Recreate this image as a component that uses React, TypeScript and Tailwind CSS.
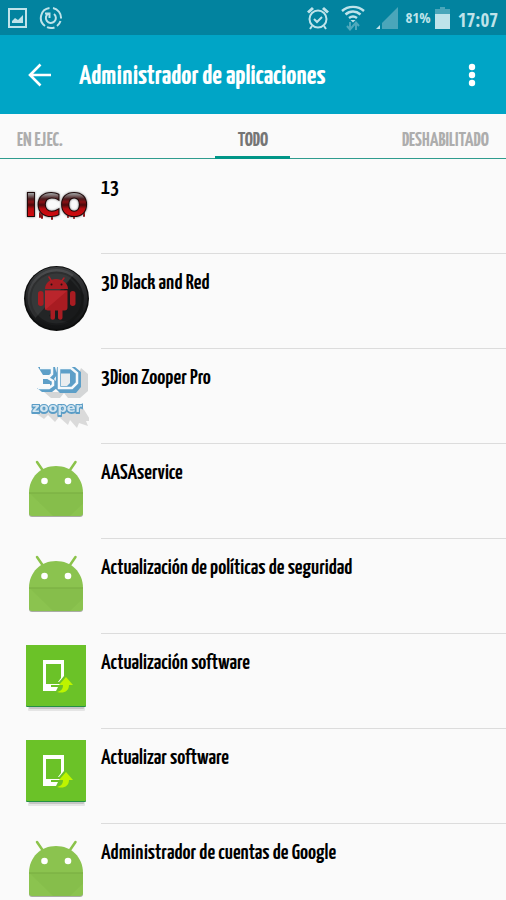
import React, { useState } from 'react';

type IconType = 'ico' | 'redDroid' | 'zooper' | 'droid' | 'update';

const apps: { name: string; icon: IconType }[] = [
  { name: '13', icon: 'ico' },
  { name: '3D Black and Red', icon: 'redDroid' },
  { name: '3Dion Zooper Pro', icon: 'zooper' },
  { name: 'AASAservice', icon: 'droid' },
  { name: 'Actualización de políticas de seguridad', icon: 'droid' },
  { name: 'Actualización software', icon: 'update' },
  { name: 'Actualizar software', icon: 'update' },
  { name: 'Administrador de cuentas de Google', icon: 'droid' },
];

const tabs = [
  { id: 'running', label: 'EN EJEC.', align: 'justify-start' },
  { id: 'all', label: 'TODO', align: 'justify-center' },
  { id: 'disabled', label: 'DESHABILITADO', align: 'justify-end' },
];

const IcoArt = () => (
  <>
    <defs>
      <linearGradient id="blood" x1="0" y1="0" x2="0" y2="1">
        <stop offset="0.2" stopColor="#9a9a9a" />
        <stop offset="0.34" stopColor="#4a1a1c" />
        <stop offset="0.42" stopColor="#8a1014" />
        <stop offset="0.5" stopColor="#4a0a0c" />
        <stop offset="0.6" stopColor="#b90c10" />
        <stop offset="0.8" stopColor="#d50a0e" />
      </linearGradient>
    </defs>
    <path d="M30 53v4M32 54v4M42 53v6M58 53v4M64 53v5M74 51v5" stroke="#8a0d10" strokeWidth="2" strokeLinecap="round" />
    <text
      x="15"
      y="56"
      fill="url(#blood)"
      stroke="#1d0809"
      strokeWidth="2"
      className="font-['DejaVu_Sans',sans-serif] text-[32px] font-bold drop-shadow-[0_0_1px_#777] [paint-order:stroke]"
    >
      ICO
    </text>
  </>
);

const RedDroidArt = () => (
  <>
    <defs>
      <linearGradient id="disc" x1="0" y1="0" x2="0" y2="1">
        <stop offset="0" stopColor="#3c3e40" />
        <stop offset="0.5" stopColor="#242527" />
        <stop offset="1" stopColor="#121314" />
      </linearGradient>
      <clipPath id="shine">
        <path d="M13 7h62L13 77z" />
      </clipPath>
    </defs>
    <circle cx="46.500" cy="43.500" r="32.500" fill="#0c0d0d" />
    <circle cx="46.500" cy="43" r="31" fill="url(#disc)" />
    <circle cx="46.500" cy="43.500" r="26" fill="#232526" stroke="#191a1b" strokeWidth="2" />
    <path d="M60 24l14 16-1 16-12 12-16-4-6-3 14-24z" fill="#131414" opacity="0.6" />
    <circle cx="46.500" cy="43" r="29" fill="#fff" opacity="0.09" clipPath="url(#shine)" />
    <g fill="#a81c22">
      <path d="M35 34c0-6 5-10 11-10s12 4 12 10z" />
      <path d="M35 35.500h22.500v17c0 2-1 3-3 3h-2v7c0 3-4.500 3-4.500 0v-7h-3v7c0 3-4.500 3-4.500 0v-7H38c-2 0-3-1-3-3z" />
      <rect x="28" y="36" width="5.500" height="15" rx="2.700" />
      <rect x="60" y="36" width="5.500" height="15" rx="2.700" />
    </g>
    <path d="M35 55V35.500h22.500z" fill="#c22a31" opacity="0.7" />
    <path d="M39 22l3 5M54 23l-3 4" stroke="#b01d24" strokeWidth="1.500" strokeLinecap="round" />
    <circle cx="41.500" cy="29.500" r="1" fill="#251012" />
    <circle cx="51.500" cy="29.500" r="1" fill="#251012" />
  </>
);

const ZooperArt = () => (
  <>
    <path d="M24 62l10 7 4-4 7 7 4-5 9 8 2-5 7 8 2-5 9 3-2-5h5l-8-13z" fill="#dadada" />
    <text
      x="22"
      y="62"
      fill="#d3e5f0"
      stroke="#5b9dc6"
      strokeWidth="2"
      className="font-['DejaVu_Sans',sans-serif] text-[13px] font-bold drop-shadow-[0_1px_0_#5b9dc6] [paint-order:stroke]"
    >
      zooper
    </text>
    <path d="M34 42l7 6h9l4-5 4 5h12l8-7V24l-7-6-10 24z" fill="#d4d6d7" />
    <path d="M28 17h17l2 8-3 4 3 4v5l-5 4H32l-5-4h13v-4h-7v-5h7v-4h-7zM47 17h18l6 5v15l-5 6H50l-5-5z" fill="#5d9fc8" />
    <path d="M30 18h12v6l-4 4 5 3v4l-4 3H28M49 18h12l6 5v10l-5 5H49z" fill="none" stroke="#f5f9fb" strokeWidth="2.500" />
    <path d="M51 22h9v11l-3 3h-6z" fill="#e9edef" />
    <path d="M51 22h9" stroke="#5d9fc8" strokeWidth="3" />
  </>
);

const DroidArt = () => (
  <>
    <path d="M19 48h54v21a3 3 0 0 1-3 3H22a3 3 0 0 1-3-3z" fill="#a9aca5" />
    <path d="M27 17l5.500 8M65.500 17l-5.500 8" stroke="#8bc34a" strokeWidth="2.500" strokeLinecap="round" />
    <path d="M19 48c0-16 12-27 27-27s27 11 27 27v20a3 3 0 0 1-3 3H22a3 3 0 0 1-3-3z" fill="#8bc34f" />
    <path d="M19 48h54" stroke="#76aa40" strokeWidth="1" />
    <path d="M20 48.500h53v10L60 71H43z" fill="#7cb342" opacity="0.3" />
    <circle cx="34.500" cy="36" r="3.300" fill="#fff" />
    <circle cx="58" cy="36" r="3.300" fill="#fff" />
  </>
);

const UpdateArt = () => (
  <>
    <rect x="18" y="66" width="57" height="10" rx="1" fill="#e5e5e5" />
    <rect x="19" y="68" width="55" height="6" rx="1" fill="#c5c5c5" />
    <rect x="16" y="10" width="60" height="62" rx="1" fill="#249044" />
    <rect x="16" y="10" width="60" height="61" rx="1" fill="#6bc228" />
    <path d="M33 25h21v16l-5 6H36v2h14v1h-9v2h7l-2 4H33zM36 29v18h12l3-4V29z" fill="#fff" fillRule="evenodd" />
    <path d="M47 57c4-1 6-3 6-7h-4l7-8 7 8h-4c0 6-5 9-12 7z" fill="#bdf400" />
  </>
);

const art: Record<IconType, React.FC> = {
  ico: IcoArt,
  redDroid: RedDroidArt,
  zooper: ZooperArt,
  droid: DroidArt,
  update: UpdateArt,
};

const AppIcon = ({ type }: { type: IconType }) => {
  const Art = art[type];
  return (
    <svg className="h-[78px] w-[66px] shrink-0" viewBox="13 7 66 78" aria-hidden="true">
      <Art />
    </svg>
  );
};

const StatusBar = () => (
  <div className="flex h-[35px] shrink-0 items-center bg-[#02839f] px-2 font-['Open_Sans_Condensed','Noto_Sans',sans-serif] text-[#bfe3ea]">
    <svg className="h-5 w-[19px]" viewBox="0 0 19 20" aria-hidden="true">
      <path d="M1 1h17v18H1z" fill="none" stroke="currentColor" strokeWidth="2" />
      <path d="M4 15v-2l3-3 3 2 5-5v8z" fill="currentColor" />
    </svg>
    <svg className="ml-3 h-6 w-6" viewBox="0 0 24 24" fill="none" stroke="currentColor" strokeWidth="2" aria-hidden="true">
      <path d="M10.500 2A10 10 0 0 0 6 20M14 2a10 10 0 0 1 8 10.500M21.500 15A10 10 0 0 1 18 20M15.500 21.500A10 10 0 0 1 8 21.200" />
      <path d="M15 8a5 5 0 1 1-5.500-.500M6 7.500h4.500V12" />
    </svg>

    <div className="ml-auto flex items-center">
      <svg className="h-6 w-[22px]" viewBox="0 0 22 24" fill="none" stroke="currentColor" strokeWidth="2" aria-hidden="true">
        <circle cx="11" cy="13" r="8.500" />
        <path d="M7 13l3 3 5-5M5 20l-2 3M17 20l2 3" />
        <path d="M1 6.500l5-4.500M21 6.500L16 2" strokeWidth="3" />
      </svg>
      <svg className="ml-3 h-[26px] w-6" viewBox="0 0 24 26" fill="none" stroke="currentColor" aria-hidden="true">
        <path d="M1 6c6-5.500 16-5.500 22 0M4.500 9.500c4.500-4 10.500-4 15 0M8 13c2.500-2 5.500-2 8 0" strokeWidth="2.400" />
        <path d="M9.500 15h5L12 17.500z" fill="currentColor" stroke="none" />
        <path d="M9 17v7M6 21l3 3.500 3-3.500M15 25v-7M12 21l3-3.500 3 3.500" stroke="#4fa9bc" strokeWidth="2" />
      </svg>
      <svg className="ml-2.5 h-6 w-6" viewBox="0 0 24 24" aria-hidden="true">
        <path d="M23 1v22H7V17z" fill="#4aa6ba" />
        <path d="M5 19v4H1z" fill="currentColor" />
      </svg>
      <span className="ml-1.5 text-[15px] font-bold">81%</span>
      <svg className="ml-1 h-6 w-[15px]" viewBox="0 0 15 24" aria-hidden="true">
        <path d="M5 1h5v2h5v5H0V3h5z" fill="#4aa6ba" />
        <path d="M0 8h15v15H0z" fill="currentColor" />
      </svg>
      <span className="ml-2 pt-1 text-[19px] leading-6 font-bold">17:07</span>
    </div>
  </div>
);

const App = () => {
  const [activeTab, setActiveTab] = useState('all');

  return (
    <div className="flex h-screen flex-col overflow-hidden bg-[#fafafa] font-['Yanone_Kaffeesatz','Open_Sans_Condensed','Roboto_Condensed',sans-serif] text-black">
      <StatusBar />

      <header className="flex h-[79px] shrink-0 items-center bg-[#00a5c6] pr-5 pl-7 text-white">
        <button type="button" aria-label="Atrás" className="flex h-6 w-6 items-center">
          <svg className="h-6 w-6" viewBox="0 0 24 24" fill="none" stroke="currentColor" strokeWidth="2.600" aria-hidden="true">
            <path d="M12.500 1.500L2 12l10.500 10.500M2 12h21" />
          </svg>
        </button>
        <h1 className="ml-[27px] pt-1 text-[28px] font-bold">Administrador de aplicaciones</h1>
        <button type="button" aria-label="Más opciones" className="ml-auto flex h-7 w-7 items-center justify-center">
          <svg className="h-6 w-2" viewBox="0 0 8 24" fill="currentColor" aria-hidden="true">
            <circle cx="4" cy="4" r="3.200" />
            <circle cx="4" cy="12" r="3.200" />
            <circle cx="4" cy="20" r="3.200" />
          </svg>
        </button>
      </header>

      <nav role="tablist" className="grid h-[45px] shrink-0 grid-cols-3 border-b border-[#2f9c8e] px-[17px]">
        {tabs.map((tab) => {
          const active = tab.id === activeTab;
          return (
            <button
              key={tab.id}
              type="button"
              role="tab"
              aria-selected={active}
              onClick={() => setActiveTab(tab.id)}
              className={`flex items-stretch text-[20px] font-bold ${tab.align} ${active ? 'text-[#757575]' : 'text-[#adadad]'}`}
            >
              <span
                className={`flex items-center justify-center border-b-[3px] pt-3 ${
                  active ? 'w-[75px] border-[#009688]' : 'border-transparent'
                }`}
              >
                {tab.label}
              </span>
            </button>
          );
        })}
      </nav>

      <ul className="min-h-0 flex-1 overflow-y-auto [scrollbar-width:none]">
        {apps.map((app) => (
          <li key={app.name} className="flex h-[95px] pl-[23px]">
            <div className="pt-2">
              <AppIcon type={app.icon} />
            </div>
            <div className="ml-3 flex-1 border-b border-[#dcdcdc] pt-4">
              <a href="#" className="block text-[22px] leading-[26px] font-semibold">
                {app.name}
              </a>
            </div>
          </li>
        ))}
      </ul>
    </div>
  );
};

export default App;
